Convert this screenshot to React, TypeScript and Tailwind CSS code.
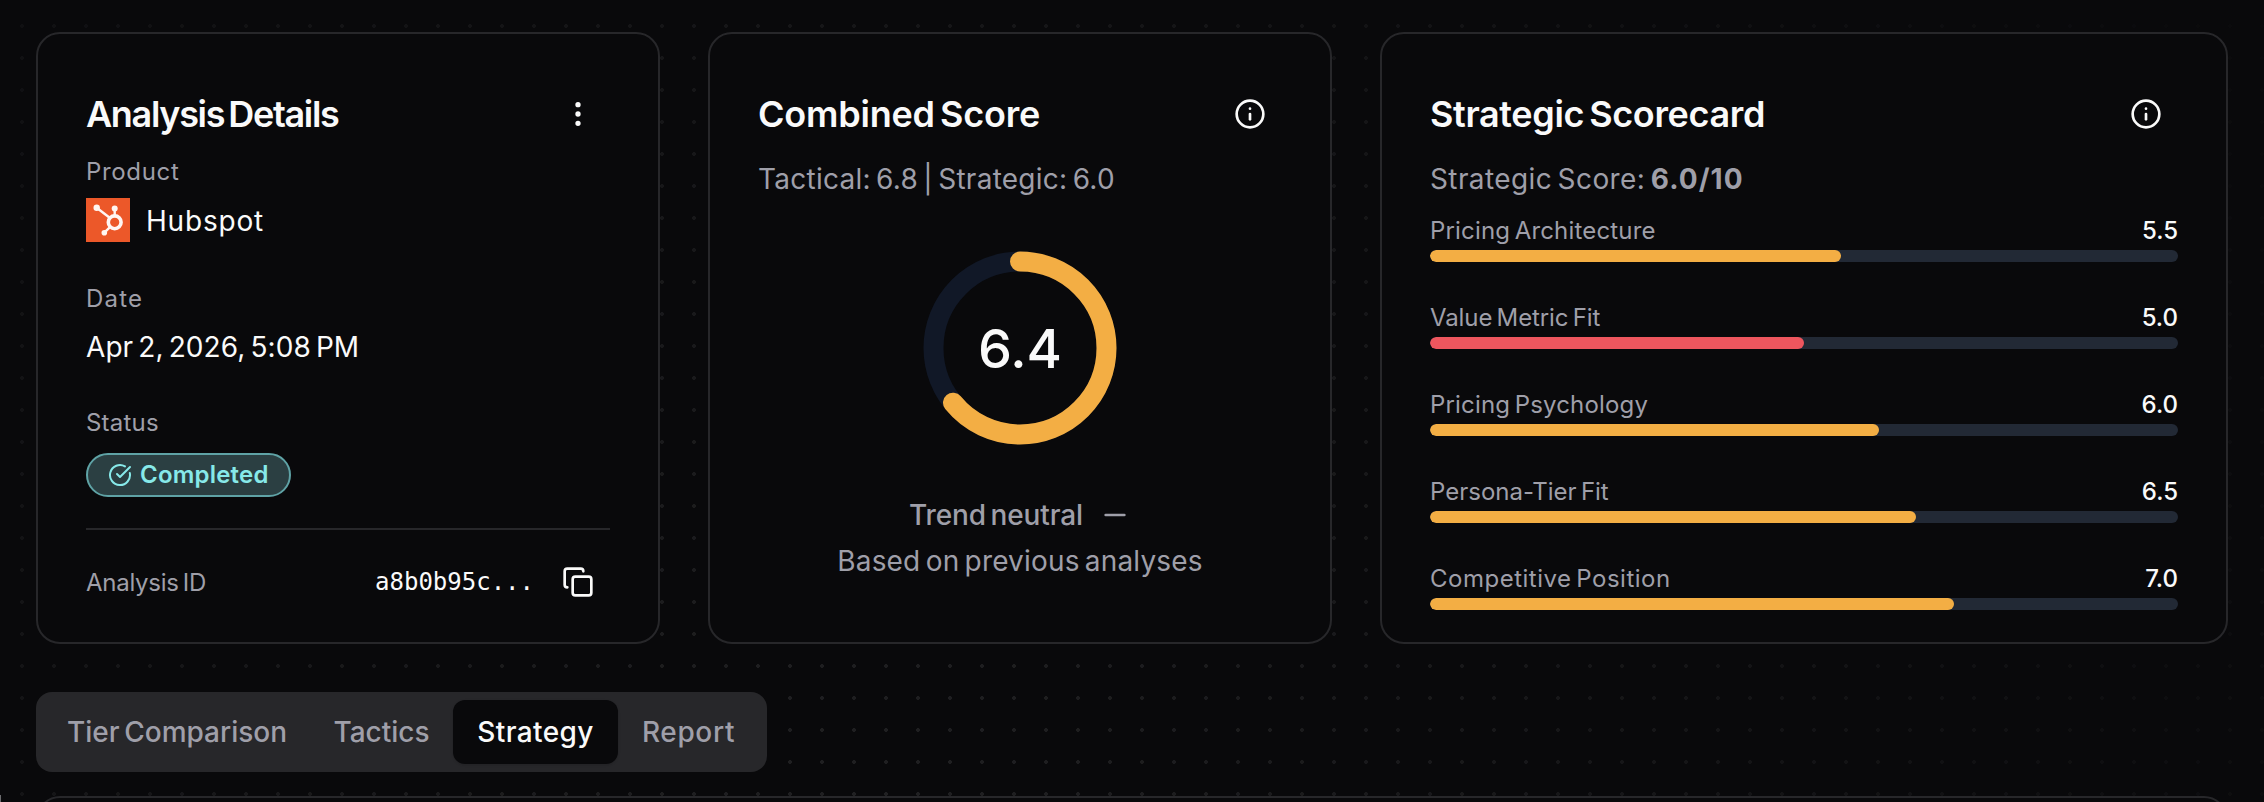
import { CircleCheckBig, Copy, EllipsisVertical, Info, Minus } from "lucide-react";
import type { ReactNode } from "react";

const scores = [
    { label: "Pricing Architecture", value: 5.5, color: "bg-[#f3ae44]", spacing: "tracking-[0.17px]" },
    { label: "Value Metric Fit", value: 5, color: "bg-[#ee565e]", spacing: "tracking-[-0.1px]" },
    { label: "Pricing Psychology", value: 6, color: "bg-[#f3ae44]", spacing: "tracking-[0.17px]" },
    { label: "Persona-Tier Fit", value: 6.5, color: "bg-[#f3ae44]", spacing: "tracking-normal" },
    { label: "Competitive Position", value: 7, color: "bg-[#f3ae44]", spacing: "tracking-[0.5px]" },
];

const tabs = [
    { title: "Tier Comparison", className: "w-[266px]" },
    { title: "Tactics", className: "w-[143px]" },
    { title: "Strategy", className: "w-[165px] tracking-[0.39px]", active: true },
    { title: "Report", className: "w-[141px] tracking-[0.65px]" },
];

const RADIUS = 86.5;
const CIRCUMFERENCE = 2 * Math.PI * RADIUS;

const Card = ({ children }: { children: ReactNode }) => (
    <section className="flex h-[612px] flex-col rounded-3xl border-2 border-[#27272a] bg-[#09090b] px-12 pt-12">
        {children}
    </section>
);

const CardHeader = ({
    title,
    spacing,
    icon,
}: {
    title: string;
    spacing: string;
    icon: ReactNode;
}) => (
    <div className="flex h-16 items-center justify-between">
        <h2 className={`text-4xl font-semibold ${spacing}`}>{title}</h2>
        <button type="button" className="flex size-16 items-center justify-center">
            {icon}
        </button>
    </div>
);

const HubspotLogo = () => (
    <svg viewBox="0 0 44 44" className="size-11" fill="none">
        <rect width="44" height="44" fill="#ec5829" />
        <g stroke="#fff6f2" strokeWidth="2.4">
            <path d="M10.7 9.7 24 20" />
            <path d="M28.7 10.3V18" />
            <path d="M18.3 34.7 24.5 28.6" />
        </g>
        <circle cx="28.7" cy="24.3" r="6.4" stroke="#fff6f2" strokeWidth="3.6" />
        <g fill="#fff6f2">
            <circle cx="10.7" cy="9.7" r="3.2" />
            <circle cx="28.7" cy="10.6" r="3" />
            <circle cx="18.3" cy="34.7" r="2.8" />
        </g>
    </svg>
);

const AnalysisDetails = () => (
    <Card>
        <CardHeader
            title="Analysis Details"
            spacing="tracking-[-1.33px]"
            icon={<EllipsisVertical className="size-8" />}
        />
        <p className="mt-2.5 text-2xl leading-8 tracking-[0.67px] text-zinc-400">Product</p>
        <div className="mt-2.5 flex items-center gap-4">
            <HubspotLogo />
            <span className="pt-px text-[28px] leading-10 tracking-[0.8px]">Hubspot</span>
        </div>

        <p className="mt-[41px] text-2xl leading-8 tracking-[1.2px] text-zinc-400">Date</p>
        <p className="mt-3 text-[28px] leading-10 tracking-[0.06px]">Apr 2, 2026, 5:08 PM</p>

        <p className="mt-10 text-2xl leading-8 tracking-[0.22px] text-zinc-400">Status</p>
        <div className="mt-3.5 flex h-11 items-center gap-2 self-start rounded-full border-2 border-[#5fa3a6] bg-[#2b3f42] px-5 text-[#87e9e9]">
            <CircleCheckBig className="size-6" />
            <span className="text-2xl leading-8 font-semibold tracking-[0.2px]">Completed</span>
        </div>

        <hr className="mt-[31px] border-t-2 border-[#27272a]" />
        <div className="mt-5 flex h-16 items-center">
            <span className="pt-0.5 text-2xl tracking-[-0.26px] text-zinc-400">Analysis ID</span>
            <code className="mr-3 ml-auto font-['DejaVu_Sans_Mono',monospace] text-2xl">a8b0b95c...</code>
            <button type="button" className="flex size-16 items-center justify-center">
                <Copy className="size-8" />
            </button>
        </div>
    </Card>
);

const CombinedScore = () => (
    <Card>
        <CardHeader
            title="Combined Score"
            spacing="tracking-[-0.22px]"
            icon={<Info className="size-8" />}
        />
        <p className="mt-[13px] text-[28px] leading-10 tracking-[0.25px] text-zinc-400">
            Tactical: 6.8 | Strategic: 6.0
        </p>

        <div className="mt-[49px] grid place-items-center *:col-start-1 *:row-start-1">
            <svg viewBox="0 0 200 200" className="size-[200px] -rotate-90" fill="none" strokeWidth="20">
                <circle cx="100" cy="100" r={RADIUS} stroke="#111827" />
                <circle
                    cx="100"
                    cy="100"
                    r={RADIUS}
                    stroke="#f3ae44"
                    strokeLinecap="round"
                    strokeDasharray={`${CIRCUMFERENCE * 0.64} ${CIRCUMFERENCE}`}
                />
            </svg>
            <span className="pt-0.5 text-[54px] leading-none font-medium">6.4</span>
        </div>

        <div className="mt-[47px] flex items-center justify-center gap-4 text-zinc-400">
            <span className="text-[28px] leading-10 font-medium tracking-[-0.12px]">Trend neutral</span>
            <Minus className="size-8" />
        </div>
        <p className="mt-1.5 text-center text-[28px] leading-10 tracking-[0.17px] text-zinc-400">
            Based on previous analyses
        </p>
    </Card>
);

const StrategicScorecard = () => (
    <Card>
        <CardHeader
            title="Strategic Scorecard"
            spacing="tracking-[-0.36px]"
            icon={<Info className="size-8" />}
        />
        <p className="mt-[13px] text-[28px] leading-10 tracking-[0.4px] text-zinc-400">
            Strategic Score: <strong className="font-bold tracking-[1.06px]">6.0/10</strong>
        </p>

        <div className="mt-4 flex flex-col gap-10">
            {scores.map(({ label, value, color, spacing }) => (
                <div key={label}>
                    <div className="flex justify-between text-2xl leading-8">
                        <span className={`text-zinc-400 ${spacing}`}>{label}</span>
                        <span className="font-medium">{value.toFixed(1)}</span>
                    </div>
                    <div className="mt-[3px] h-3 overflow-hidden rounded-full bg-[#222935]">
                        <div className={`h-full rounded-full ${color}`} style={{ width: `${value * 10}%` }} />
                    </div>
                </div>
            ))}
        </div>
    </Card>
);

const App = () => {
    return (
        <main className="relative isolate h-[802px] overflow-hidden bg-[#09090b] px-9 pt-8 font-['Inter',sans-serif] text-[#fafafa] **:[word-spacing:-0.1em]">
            {/* dotted backdrop, fades out towards the edges */}
            <div className="absolute inset-0 -z-10 bg-[radial-gradient(circle,#212123_1.6px,transparent_2.2px)] bg-size-[32px_32px] bg-position-[6px_10px] mask-[radial-gradient(1700px_1800px_at_880px_850px,black,transparent)]" />
            <div className="absolute top-[795px] left-0 h-2 w-px bg-[#6b6b6e]" />

            <div className="grid grid-cols-[624px_624px_848px] gap-12">
                <AnalysisDetails />
                <CombinedScore />
                <StrategicScorecard />
            </div>

            <nav className="mt-12 flex h-20 w-fit rounded-2xl bg-[#27272a] p-2">
                {tabs.map(({ title, className, active }) => (
                    <button
                        key={title}
                        type="button"
                        className={`rounded-xl text-[28px] font-medium ${className} ${
                            active ? "bg-[#09090b] shadow-sm" : "text-zinc-400"
                        }`}
                    >
                        {title}
                    </button>
                ))}
            </nav>

            <section className="mt-6 h-40 rounded-3xl border-2 border-[#27272a] bg-[#09090b]" />
        </main>
    );
};

export default App;
